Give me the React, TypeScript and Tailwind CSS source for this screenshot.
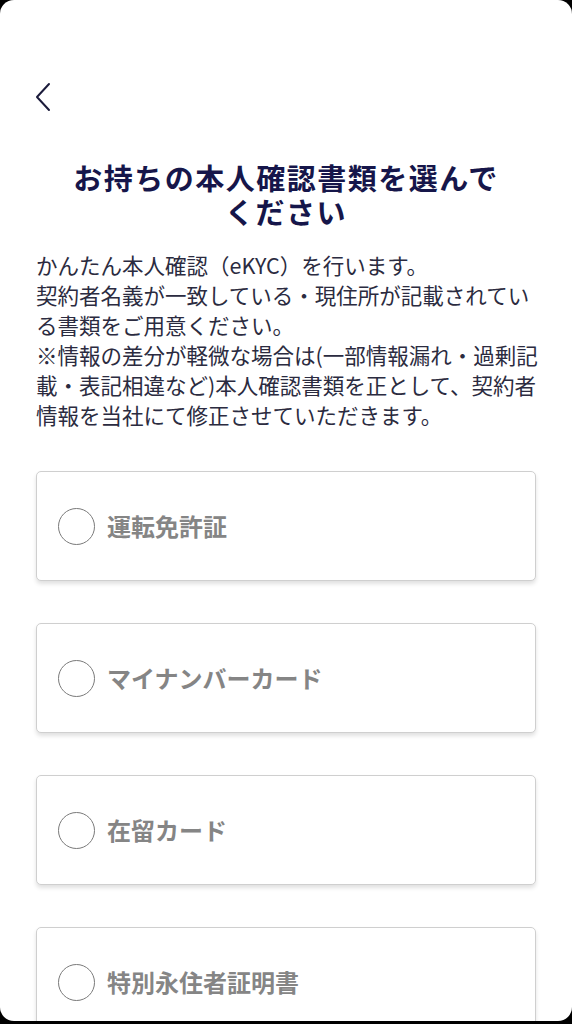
import { useState } from "react";

const DOC_TYPES = ["運転免許証", "マイナンバーカード", "在留カード", "特別永住者証明書"];

const DESCRIPTION_LINES = [
  "かんたん本人確認（eKYC）を行います。",
  "契約者名義が一致している・現住所が記載されてい",
  "る書類をご用意ください。",
  "※情報の差分が軽微な場合は(一部情報漏れ・過剰記",
  "載・表記相違など)本人確認書類を正として、契約者",
  "情報を当社にて修正させていただきます。",
];

const FONT = { fontFamily: '"Noto Sans CJK JP", "Noto Sans", sans-serif' };

export default function App() {
  const [selected, setSelected] = useState<string | null>(null);

  return (
    <div className="h-[1024px] w-[572px] overflow-hidden bg-black" style={FONT}>
      <div className="h-[1021px] overflow-hidden rounded-[14px] bg-white">
        {/* Header */}
        <div className="h-[160px] pt-[80px] pl-[30px]">
          <button className="flex h-[34px] w-[26px] items-center justify-center">
            <svg width="20" height="30" viewBox="0 0 20 30" fill="none">
              <path d="M16 2 L4 15 L16 28" stroke="#1c1c3c" strokeWidth="2" strokeLinecap="round" strokeLinejoin="round" />
            </svg>
          </button>
        </div>

        {/* Title */}
        <h1 className="px-[64px] text-center text-[29px] font-bold leading-[34px] tracking-[1.5px] text-[#16164a]">
          お持ちの本人確認書類を選んでください
        </h1>

        {/* Description */}
        <div className="mt-[22px] px-[36px] text-[21.5px] leading-[30px] text-[#2b2b40]">
          {DESCRIPTION_LINES.map((line) => (
            <p key={line} className="whitespace-nowrap">
              {line}
            </p>
          ))}
        </div>

        {/* Options */}
        <div className="mt-[41px] flex flex-col gap-[42px] px-[36px]">
          {DOC_TYPES.map((label) => (
            <label
              key={label}
              className="flex h-[110px] cursor-pointer items-center gap-[12px] rounded-[5px] border border-[#cfcfcf] bg-white pl-[21px] shadow-[0_3px_4px_rgba(0,0,0,0.12)]"
              onClick={() => setSelected(label)}
            >
              <span className="flex h-[37px] w-[37px] items-center justify-center rounded-full border-[1.5px] border-[#7a7a7a]">
                {selected === label && <span className="h-[19px] w-[19px] rounded-full bg-[#16164a]" />}
              </span>
              <span className="text-[24px] font-bold text-[#858585]">{label}</span>
            </label>
          ))}
        </div>
      </div>
    </div>
  );
}
